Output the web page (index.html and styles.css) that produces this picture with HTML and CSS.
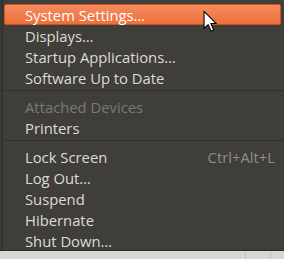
FILE: index.html
```html
<!DOCTYPE html>
<html lang="en">
  <head>
    <meta charset="UTF-8" />
    <title>Session Menu</title>
    <link rel="stylesheet" href="styles.css">
  </head>
  <body>
    <div class="screen">
      <div class="menu">
        <div class="item active">System Settings…</div>
        <div class="item">Displays…</div>
        <div class="item">Startup Applications…</div>
        <div class="item">Software Up to Date</div>
        <div class="separator"></div>
        <div class="item disabled">Attached Devices</div>
        <div class="item">Printers</div>
        <div class="separator"></div>
        <div class="item">
          <span>Lock Screen</span>
          <span class="shortcut">Ctrl+Alt+L</span>
        </div>
        <div class="item">Log Out…</div>
        <div class="item">Suspend</div>
        <div class="item">Hibernate</div>
        <div class="item">Shut Down…</div>
      </div>

      <div class="desktop">
        <div class="pane"></div>
        <div class="pane narrow"></div>
        <div class="pane tiny"></div>
      </div>

      <svg class="cursor" width="15" height="23" viewBox="0 0 14 21">
        <path d="M1 1 L1 17 L4.8 13.4 L7.6 19.6 L10 18.5 L7.3 12.4 L12.4 12.4 Z"
              fill="#fff" stroke="#000" stroke-width="1" stroke-linejoin="round" />
      </svg>
    </div>
  </body>
</html>
```

FILE: styles.css
```css
* {
  margin: 0;
  padding: 0;
  box-sizing: border-box;
}

body {
  width: 284px;
  height: 259px;
  overflow: hidden;
  background: #3a3935;
  font-family: "Open Sans", "DejaVu Sans", sans-serif;
}

.screen {
  position: relative;
  height: 259px;
  display: flex;
  flex-direction: column;
}

.menu {
  height: 250px;
  flex-shrink: 0;
  overflow: hidden;
  margin-left: 2px;
  padding-top: 4px;
  background: #3f3e3a;
  border-left: 1px solid #2e2d2a;
  display: flex;
  flex-direction: column;
}

.item {
  height: 21px;
  flex-shrink: 0;
  margin: 0 3px 0 1px;
  padding: 0 6px 0 21px;
  display: flex;
  align-items: center;
  justify-content: space-between;
  color: #dfdbd2;
  font-size: 14.8px;
  white-space: nowrap;
}

.item.active {
  color: #ffffff;
  background: linear-gradient(#f58c5e, #ee6f3c);
  border: 1px solid #c8551f;
  border-radius: 2px;
  padding-left: 20px;
}

.item.disabled {
  color: #7c7a74;
}

.shortcut {
  color: #8e8c87;
}

.separator {
  height: 6px;
  flex-shrink: 0;
  margin-top: 2px;
  border-top: 1px solid #302f2c;
}

.desktop {
  flex: 1;
  display: flex;
  background: #d7d8d6;
  border-top: 1px solid #2b2a27;
}

.pane {
  flex: 1;
  border-right: 1px solid #bfc3c4;
}

.pane.narrow {
  flex: 0 0 25px;
}

.pane.tiny {
  flex: 0 0 13px;
  border-right: none;
}

.cursor {
  position: absolute;
  left: 203px;
  top: 10px;
}
```
